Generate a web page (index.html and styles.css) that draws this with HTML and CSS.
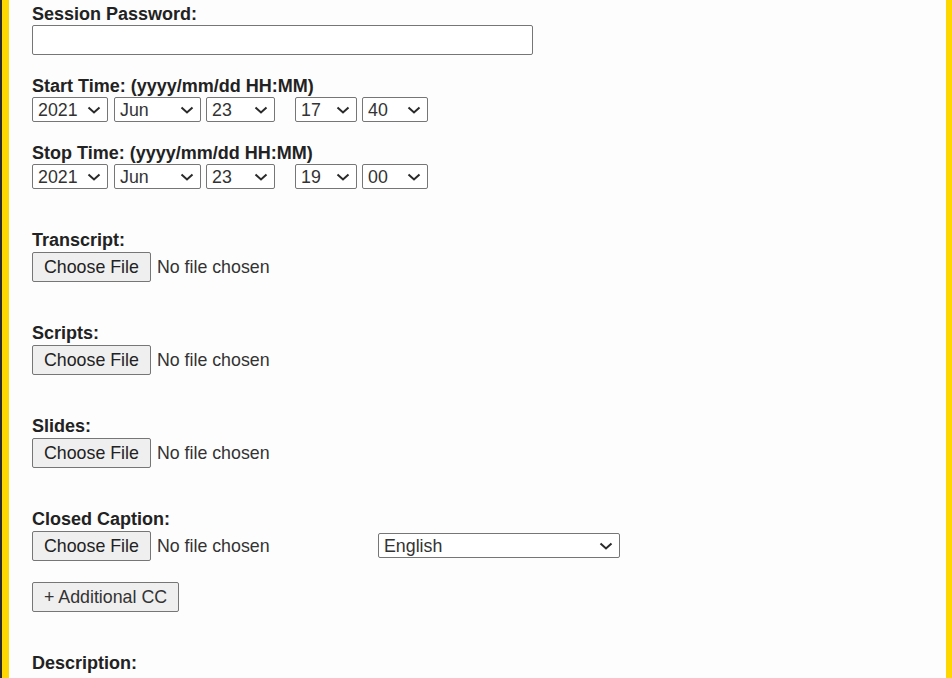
FILE: index.html
```html
<!DOCTYPE html>
<html lang="en">
<head>
  <meta charset="UTF-8" />
  <meta name="viewport" content="width=device-width, initial-scale=1.0"/>
  <title>Session Upload</title>
  <link rel="stylesheet" href="styles.css">
</head>
<body>
  <div class="page">
    <form class="form">
      <div class="field">
        <label for="sessPass">Session Password:</label>
        <input type="password" id="sessPass" class="text-input" />
      </div>

      <div class="field">
        <label>Start Time: (yyyy/mm/dd HH:MM)</label>
        <div class="time-row">
          <span class="sel-wrap sel-year"><select><option>2020</option><option selected>2021</option><option>2022</option></select><svg class="chev" viewBox="0 0 14 8"><path d="M1.5 1.5l5.5 5 5.5-5"/></svg></span>
          <span class="sel-wrap sel-month"><select><option>May</option><option selected>Jun</option><option>Jul</option></select><svg class="chev" viewBox="0 0 14 8"><path d="M1.5 1.5l5.5 5 5.5-5"/></svg></span>
          <span class="sel-wrap sel-day"><select><option>22</option><option selected>23</option><option>24</option></select><svg class="chev" viewBox="0 0 14 8"><path d="M1.5 1.5l5.5 5 5.5-5"/></svg></span>
          <span class="sel-wrap sel-hour"><select><option>16</option><option selected>17</option><option>18</option></select><svg class="chev" viewBox="0 0 14 8"><path d="M1.5 1.5l5.5 5 5.5-5"/></svg></span>
          <span class="sel-wrap sel-min"><select><option>30</option><option selected>40</option><option>50</option></select><svg class="chev" viewBox="0 0 14 8"><path d="M1.5 1.5l5.5 5 5.5-5"/></svg></span>
        </div>
      </div>

      <div class="field field-wide">
        <label>Stop Time: (yyyy/mm/dd HH:MM)</label>
        <div class="time-row">
          <span class="sel-wrap sel-year"><select><option>2020</option><option selected>2021</option><option>2022</option></select><svg class="chev" viewBox="0 0 14 8"><path d="M1.5 1.5l5.5 5 5.5-5"/></svg></span>
          <span class="sel-wrap sel-month"><select><option>May</option><option selected>Jun</option><option>Jul</option></select><svg class="chev" viewBox="0 0 14 8"><path d="M1.5 1.5l5.5 5 5.5-5"/></svg></span>
          <span class="sel-wrap sel-day"><select><option>22</option><option selected>23</option><option>24</option></select><svg class="chev" viewBox="0 0 14 8"><path d="M1.5 1.5l5.5 5 5.5-5"/></svg></span>
          <span class="sel-wrap sel-hour"><select><option>18</option><option selected>19</option><option>20</option></select><svg class="chev" viewBox="0 0 14 8"><path d="M1.5 1.5l5.5 5 5.5-5"/></svg></span>
          <span class="sel-wrap sel-min"><select><option selected>00</option><option>10</option><option>20</option></select><svg class="chev" viewBox="0 0 14 8"><path d="M1.5 1.5l5.5 5 5.5-5"/></svg></span>
        </div>
      </div>

      <div class="field field-wide">
        <label for="transcript">Transcript:</label>
        <input type="file" id="transcript" class="file-input" />
      </div>

      <div class="field field-wide">
        <label for="scripts">Scripts:</label>
        <input type="file" id="scripts" class="file-input" />
      </div>

      <div class="field field-wide">
        <label for="slides">Slides:</label>
        <input type="file" id="slides" class="file-input" />
      </div>

      <div class="field">
        <label for="cc">Closed Caption:</label>
        <div class="cc-row">
          <input type="file" id="cc" class="file-input" />
          <span class="sel-wrap sel-lang"><select>
            <option selected>English</option>
            <option>Spanish</option>
            <option>French</option>
          </select><svg class="chev" viewBox="0 0 14 8"><path d="M1.5 1.5l5.5 5 5.5-5"/></svg></span>
        </div>
      </div>

      <div class="field field-wide">
        <button type="button" class="btn-add">+ Additional CC</button>
      </div>

      <div class="field">
        <label for="desc">Description:</label>
      </div>
    </form>
  </div>
</body>
</html>
```

FILE: styles.css
```css
html, body {
  margin: 0;
  background: #fdfdfd;
}

body {
  font-family: "Liberation Sans", Arial, sans-serif;
  color: #222;
}

.page {
  border-left: 2px solid #2b2b2b;
}

.form {
  min-height: 100vh;
  box-sizing: border-box;
  border-left: 7px solid #ffd700;
  border-right: 6px solid #ffd700;
  padding: 4px 0 0 23px;
}

.field {
  margin-bottom: 21px;
}

.field-wide {
  margin-bottom: 41px;
}

.field label {
  display: block;
  font-size: 18px;
  line-height: 21px;
  font-weight: bold;
  color: #222;
}

.text-input {
  display: block;
  width: 501px;
  height: 30px;
  box-sizing: border-box;
  margin: 0;
  border: 1px solid #767676;
  border-radius: 2px;
  background: #fff;
  font-size: 17.8px;
}

/* select with a drawn chevron on top */
.sel-wrap {
  position: relative;
  display: inline-block;
  height: 25px;
}

.sel-wrap select {
  -webkit-appearance: none;
  appearance: none;
  width: 100%;
  height: 25px;
  box-sizing: border-box;
  margin: 0;
  padding: 0 0 0 5px;
  border: 1px solid #767676;
  border-radius: 2px;
  background: #fff;
  color: #333;
  font-family: "Liberation Sans", Arial, sans-serif;
  font-size: 17.8px;
}

.chev {
  position: absolute;
  right: 7px;
  top: 9px;
  width: 14px;
  height: 8px;
  fill: none;
  stroke: #2a2a2a;
  stroke-width: 2;
  pointer-events: none;
}

.time-row {
  display: flex;
  gap: 5px;
}

.sel-year { width: 76px; }
.sel-month { width: 87px; margin-left: 1px; }
.sel-day { width: 69px; }
.sel-hour { width: 62px; margin-left: 15px; }
.sel-min { width: 66px; }
.sel-lang { width: 242px; }

.file-input {
  display: block;
  height: 30px;
  margin: 1px 0 0;
  font-family: "Liberation Sans", Arial, sans-serif;
  font-size: 17.8px;
  color: #333;
}

.file-input::file-selector-button,
.btn-add {
  height: 30px;
  box-sizing: border-box;
  margin: 0 6px 0 0;
  padding: 0 11px;
  border: 1px solid #767676;
  border-radius: 2px;
  background: #efefef;
  color: #222;
  font-family: "Liberation Sans", Arial, sans-serif;
  font-size: 17.8px;
}

.cc-row {
  display: flex;
  align-items: center;
}

.cc-row .file-input {
  width: 346px;
}

.btn-add {
  margin: 0;
  color: #333;
}
```
